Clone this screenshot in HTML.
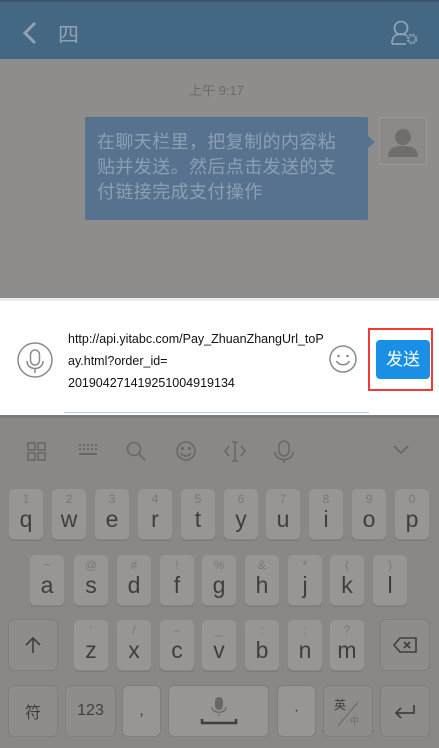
<!DOCTYPE html>
<html><head><meta charset="utf-8"><style>
*{margin:0;padding:0;box-sizing:border-box}
body{width:439px;height:748px;overflow:hidden;background:#8a8785;font-family:"Liberation Sans","Noto Sans CJK SC",sans-serif;position:relative}
.a{position:absolute}
.hdr{left:0;top:0;width:439px;height:59px;background:#446783;border-top:2px solid #3a566c}
.chat{left:0;top:59px;width:439px;height:239px;background:#8e8d8b}
.bub{left:85px;top:117px;width:283px;height:103px;background:#57728f;border-radius:2px;color:#8d9fb3;font-size:18px;line-height:25px;padding:13px 12px;letter-spacing:0.4px;white-space:nowrap}
.inp{left:0;top:298px;width:439px;height:117px;background:#fff;border-top:3px solid #ececec}
.key{position:absolute;width:36px;height:52px;background:#989593;border:1px solid #8a8785;border-radius:6px;box-shadow:0 1px 0 #7c7977;color:#3f3e3d;text-align:center}
.key b{display:block;font-weight:normal;font-size:12px;color:#7a7877;line-height:14px;margin-top:3px}
.key i{display:block;font-style:normal;font-size:23px;line-height:26px}
.fk{position:absolute;height:52px;background:#8f8c8a;border:1px solid #807d7b;border-radius:6px;color:#3f3e3d;display:flex;align-items:center;justify-content:center;font-size:16px}
</style></head><body>
<div class="a hdr">
<svg class="a" style="left:22px;top:19px" width="16" height="24"><path d="M13 2 L3 12 L13 22" fill="none" stroke="#8fa2b4" stroke-width="3"/></svg>
<div class="a" style="left:58px;top:17px;font-size:21px;color:#8fa2b4">四</div>
<svg class="a" style="left:390px;top:17px" width="30" height="28"><circle cx="11" cy="9" r="6.5" fill="none" stroke="#8fa2b4" stroke-width="1.8"/><path d="M2 25 C2 17 6 15 11 15 C14 15 16 16 17 17 M2 25 H16" fill="none" stroke="#8fa2b4" stroke-width="1.8"/><circle cx="22" cy="20" r="4" fill="none" stroke="#8fa2b4" stroke-width="2.5" stroke-dasharray="2 1.2"/></svg>
</div>
<div class="a chat"></div>
<div class="a" style="left:189px;top:80px;font-size:13px;color:#6c6b6a">上午 9:17</div>
<div class="a bub">在聊天栏里，把复制的内容粘<br>贴并发送。然后点击发送的支<br>付链接完成支付操作</div>
<div class="a" style="left:368px;top:136px;width:0;height:0;border-left:7px solid #57728f;border-top:6px solid transparent;border-bottom:6px solid transparent"></div>
<div class="a" style="left:379px;top:117px;width:48px;height:48px;background:#8b8a88;border:1px solid #9a9997"><svg width="46" height="46"><circle cx="23" cy="19" r="8" fill="#6f6e6d"/><path d="M8 39 C8 30 14 28 23 28 C32 28 38 30 38 39Z" fill="#6f6e6d"/></svg></div>
<div class="a inp"></div>
<svg class="a" style="left:16px;top:341px" width="38" height="38"><circle cx="19" cy="19" r="17" fill="none" stroke="#8a8a8a" stroke-width="1.5"/><rect x="14.5" y="9" width="9" height="15" rx="4.5" fill="none" stroke="#8a8a8a" stroke-width="1.5"/><path d="M11 20 C11 30 27 30 27 20 M19 28 V32" fill="none" stroke="#8a8a8a" stroke-width="1.5"/></svg>
<div class="a" style="left:68px;top:328px;font-size:12.5px;line-height:22px;color:#111">http://api.yitabc.com/Pay_ZhuanZhangUrl_toP<br>ay.html?order_id=<br>2019042714192510049191­34</div>
<div class="a" style="left:64px;top:412px;width:305px;height:1px;background:#a9d0ec"></div>
<svg class="a" style="left:328px;top:344px" width="30" height="30"><circle cx="15" cy="15" r="13" fill="none" stroke="#8a8a8a" stroke-width="1.5"/><circle cx="10.5" cy="12" r="1.3" fill="#8a8a8a"/><circle cx="19.5" cy="12" r="1.3" fill="#8a8a8a"/><path d="M8.5 17 C11 22 19 22 21.5 17" fill="none" stroke="#8a8a8a" stroke-width="1.5"/></svg>
<div class="a" style="left:368px;top:328px;width:65px;height:63px;border:2px solid #f03a3a"></div>
<div class="a" style="left:376px;top:340px;width:54px;height:39px;background:#1a8fe6;border-radius:4px;color:#fff;font-size:17px;text-align:center;line-height:39px">发送</div>
<div class="a" style="left:0;top:415px;width:439px;height:3px;background:#7e7b79"></div>
<svg class="a" style="left:0;top:430px" width="439" height="40" fill="none" stroke="#6a6867" stroke-width="1.6">
<rect x="28" y="13" width="7" height="7"/><rect x="38" y="13" width="7" height="7"/><rect x="28" y="23" width="7" height="7"/><rect x="38" y="23" width="7" height="7"/>
<path d="M79 15h2M83 15h2M87 15h2M91 15h2M95 15h2M79 19h2M83 19h2M87 19h2M91 19h2M95 19h2M79 24h18" stroke-width="2"/>
<circle cx="134" cy="19" r="6.5"/><path d="M139 24l6 6"/>
<circle cx="186" cy="21" r="9"/><circle cx="182.5" cy="18.5" r=".8"/><circle cx="189.5" cy="18.5" r=".8"/><path d="M181 23c2 4 8 4 10 0"/>
<path d="M229 16l-4 5 4 5M241 16l4 5-4 5M232 12h6M235 12v19M232 31h6"/>
<rect x="279" y="11" width="10" height="15" rx="5"/><path d="M275 22c0 10 18 10 18 0M284 30v3"/>
<path d="M394 16l7 7 7-7" stroke-width="1.8"/>
</svg>
<div class="key" style="left:8px;top:488px"><b>1</b><i>q</i></div>
<div class="key" style="left:51px;top:488px"><b>2</b><i>w</i></div>
<div class="key" style="left:94px;top:488px"><b>3</b><i>e</i></div>
<div class="key" style="left:137px;top:488px"><b>4</b><i>r</i></div>
<div class="key" style="left:180px;top:488px"><b>5</b><i>t</i></div>
<div class="key" style="left:223px;top:488px"><b>6</b><i>y</i></div>
<div class="key" style="left:265px;top:488px"><b>7</b><i>u</i></div>
<div class="key" style="left:308px;top:488px"><b>8</b><i>i</i></div>
<div class="key" style="left:351px;top:488px"><b>9</b><i>o</i></div>
<div class="key" style="left:394px;top:488px"><b>0</b><i>p</i></div>
<div class="key" style="left:29px;top:554px"><b>~</b><i>a</i></div>
<div class="key" style="left:73px;top:554px"><b>@</b><i>s</i></div>
<div class="key" style="left:116px;top:554px"><b>#</b><i>d</i></div>
<div class="key" style="left:159px;top:554px"><b>!</b><i>f</i></div>
<div class="key" style="left:201px;top:554px"><b>%</b><i>g</i></div>
<div class="key" style="left:244px;top:554px"><b>&amp;</b><i>h</i></div>
<div class="key" style="left:287px;top:554px"><b>*</b><i>j</i></div>
<div class="key" style="left:329px;top:554px"><b>(</b><i>k</i></div>
<div class="key" style="left:372px;top:554px"><b>)</b><i>l</i></div>
<div class="fk" style="left:8px;top:619px;width:50px"><svg width="20" height="20"><path d="M10 18V3M3 10l7-7 7 7" fill="none" stroke="#3f3e3d" stroke-width="1.6"/></svg></div>
<div class="key" style="left:73px;top:619px"><b>'</b><i>z</i></div>
<div class="key" style="left:116px;top:619px"><b>/</b><i>x</i></div>
<div class="key" style="left:159px;top:619px"><b>–</b><i>c</i></div>
<div class="key" style="left:201px;top:619px"><b>_</b><i>v</i></div>
<div class="key" style="left:244px;top:619px"><b>:</b><i>b</i></div>
<div class="key" style="left:287px;top:619px"><b>;</b><i>n</i></div>
<div class="key" style="left:329px;top:619px"><b>?</b><i>m</i></div>
<div class="fk" style="left:380px;top:619px;width:50px"><svg width="26" height="18"><path d="M8 2H24V16H8L2 9Z" fill="none" stroke="#3f3e3d" stroke-width="1.6"/><path d="M12 6l6 6M18 6l-6 6" stroke="#3f3e3d" stroke-width="1.6"/></svg></div>
<div class="fk" style="left:8px;top:685px;width:50px">符</div>
<div class="fk" style="left:65px;top:685px;width:51px">123</div>
<div class="fk" style="left:122px;top:685px;width:39px;background:#989593">,</div>
<div class="fk" style="left:168px;top:685px;width:101px;background:#989593"><svg width="40" height="40"><rect x="16" y="6" width="8" height="13" rx="4" fill="#6a6867"/><path d="M13 16c0 7 14 7 14 0M20 23v2" fill="none" stroke="#6a6867" stroke-width="1.3"/><path d="M3 28v4h34v-4" fill="none" stroke="#3f3e3d" stroke-width="2.5"/></svg></div>
<div class="fk" style="left:277px;top:685px;width:39px;background:#989593">·</div>
<div class="fk" style="left:323px;top:685px;width:50px"><span style="position:absolute;left:10px;top:10px;font-size:12px">英</span><span style="position:absolute;left:26px;top:28px;font-size:9px;color:#6a6867">中</span><svg class="a" style="left:12px;top:14px" width="24" height="28"><path d="M22 2L2 26" stroke="#6a6867" stroke-width="1"/></svg></div>
<div class="fk" style="left:380px;top:685px;width:50px"><svg width="26" height="18"><path d="M22 3V11H4M9 6l-5 5 5 5" fill="none" stroke="#3f3e3d" stroke-width="1.7"/></svg></div>
</body></html>
